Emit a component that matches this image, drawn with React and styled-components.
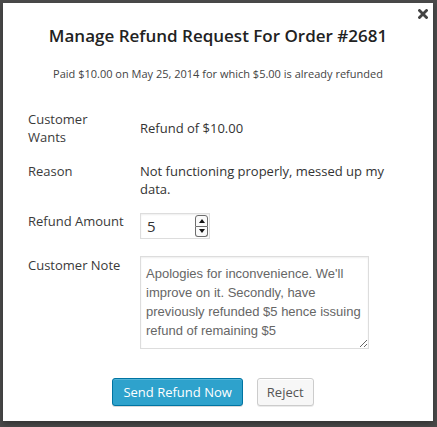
import React from 'react';
import styled, { createGlobalStyle } from 'styled-components';

const GlobalStyle = createGlobalStyle`
  html, body {
    margin: 0;
    padding: 0;
    background: #4a4a4a;
  }
  body {
    font-family: 'Open Sans', 'Liberation Sans', sans-serif;
  }
`;

const Overlay = styled.div`
  width: 437px;
  height: 427px;
  padding: 3px 4px 6px 3px;
  box-sizing: border-box;
  background: #4a4a4a;
`;

const Modal = styled.div`
  position: relative;
  background: #fff;
  height: 418px;
  box-sizing: border-box;
  padding-top: 21px;
  box-shadow: 0 3px 6px rgba(0, 0, 0, 0.3);
`;

const CloseButton = styled.button`
  position: absolute;
  top: 4px;
  right: 3px;
  width: 14px;
  height: 14px;
  padding: 0;
  border: 0;
  background: none;
  display: flex;
  align-items: center;
  justify-content: center;
  cursor: pointer;
`;

const Title = styled.h2`
  margin: 0;
  text-align: center;
  font-size: 17px;
  line-height: 24px;
  font-weight: 600;
  color: #222;
`;

const Subtitle = styled.p`
  margin: 18px 0 0;
  text-align: center;
  font-size: 11px;
  line-height: 16px;
  color: #444;
`;

const Details = styled.div`
  display: grid;
  grid-template-columns: 112px 1fr;
  margin: 28px 0 0 25px;
  padding-right: 40px;
  font-size: 13px;
  line-height: 18px;
  color: #333;
`;

const Label = styled.div`
  margin-top: ${({ $top }) => $top || 0}px;
  color: #3a3a3a;
`;

const Value = styled.div`
  margin-top: ${({ $top }) => $top || 0}px;
  align-self: ${({ $center }) => ($center ? 'center' : 'start')};
  color: #333;
`;

const NumberBox = styled.div`
  display: flex;
  align-items: center;
  width: 70px;
  height: 26px;
  box-sizing: border-box;
  border: 1px solid #ddd;
  box-shadow: inset 0 1px 2px rgba(0, 0, 0, 0.07);
  padding: 0 1px 0 6px;
`;

const NumberText = styled.span`
  flex: 1;
  font-size: 15px;
  color: #333;
`;

const Stepper = styled.div`
  display: flex;
  flex-direction: column;
  width: 13px;
  height: 22px;
`;

const StepButton = styled.div`
  flex: 1;
  display: flex;
  align-items: center;
  justify-content: center;
  border: 1px solid #6d6d6d;
  border-radius: ${({ $down }) => ($down ? '0 0 3px 3px' : '3px 3px 0 0')};
  border-top-width: ${({ $down }) => ($down ? 0 : 1)}px;
  background: #fafafa;
`;

const Arrow = styled.span`
  width: 0;
  height: 0;
  border-left: 3.5px solid transparent;
  border-right: 3.5px solid transparent;
  ${({ $down }) => ($down ? 'border-top: 4px solid #111;' : 'border-bottom: 4px solid #111;')}
`;

const NoteArea = styled.textarea`
  display: block;
  width: 229px;
  height: 93px;
  box-sizing: border-box;
  margin: 0;
  padding: 7px 5px;
  border: 1px solid #ddd;
  box-shadow: inset 0 1px 2px rgba(0, 0, 0, 0.07);
  font-family: 'Liberation Sans', Arial, sans-serif;
  font-size: 13px;
  line-height: 19px;
  color: #666;
  outline: none;
`;

const Actions = styled.div`
  display: flex;
  justify-content: center;
  gap: 14px;
  margin-top: 29px;
  padding-right: 10px;
`;

const Button = styled.button`
  height: 28px;
  box-sizing: border-box;
  padding: 0 ${({ $primary }) => ($primary ? 10 : 9)}px;
  font-family: 'Open Sans', 'Liberation Sans', sans-serif;
  font-size: 13px;
  border-radius: 3px;
  cursor: pointer;
  border: 1px solid ${({ $primary }) => ($primary ? '#0074a2' : '#ccc')};
  background: ${({ $primary }) => ($primary ? '#2ea2cc' : '#f7f7f7')};
  color: ${({ $primary }) => ($primary ? '#fff' : '#555')};
  box-shadow: ${({ $primary }) =>
    $primary
      ? 'inset 0 1px 0 rgba(120, 200, 230, 0.5), 0 1px 0 rgba(0, 0, 0, 0.15)'
      : 'inset 0 1px 0 #fff, 0 1px 0 rgba(0, 0, 0, 0.08)'};
`;

const App = () => (
  <>
    <GlobalStyle />
    <Overlay>
      <Modal>
        <CloseButton aria-label="Close">
          <svg width="10" height="10" viewBox="0 0 10 10">
            <path d="M1.5 1.5 L8.5 8.5 M8.5 1.5 L1.5 8.5" stroke="#444" strokeWidth="2.8" strokeLinecap="square" />
          </svg>
        </CloseButton>
        <Title>Manage Refund Request For Order #2681</Title>
        <Subtitle>Paid $10.00 on May 25, 2014 for which $5.00 is already refunded</Subtitle>

        <Details>
          <Label>Customer<br />Wants</Label>
          <Value $center>Refund of $10.00</Value>

          <Label $top={16}>Reason</Label>
          <Value $top={16}>Not functioning properly, messed up my data.</Value>

          <Label $top={14}>Refund Amount</Label>
          <Value $top={15}>
            <NumberBox>
              <NumberText>5</NumberText>
              <Stepper>
                <StepButton><Arrow /></StepButton>
                <StepButton $down><Arrow $down /></StepButton>
              </Stepper>
            </NumberBox>
          </Value>

          <Label $top={17}>Customer Note</Label>
          <Value $top={17}>
            <NoteArea
              readOnly
              defaultValue="Apologies for inconvenience. We'll improve on it. Secondly, have previously refunded $5 hence issuing refund of remaining $5"
            />
          </Value>
        </Details>

        <Actions>
          <Button $primary>Send Refund Now</Button>
          <Button>Reject</Button>
        </Actions>
      </Modal>
    </Overlay>
  </>
);

export default App;
